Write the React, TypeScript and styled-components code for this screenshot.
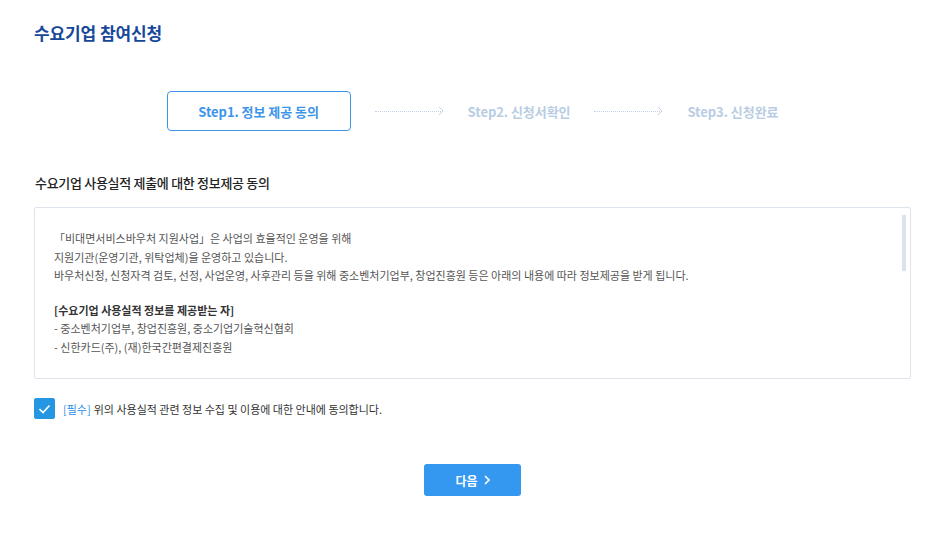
import React, { useState } from "react";
import styled, { createGlobalStyle } from "styled-components";

const GlobalStyle = createGlobalStyle`
    * { box-sizing: border-box; }
    body {
        margin: 0;
        background: #ffffff;
        font-family: "Noto Sans CJK KR", "Noto Sans", sans-serif;
        color: #333;
    }
`;

const Page = styled.div`
    padding: 20px 20px 40px 34px;
    display: flex;
    flex-direction: column;
`;

const Title = styled.h1`
    margin: 0;
    font-size: 17px;
    font-weight: 700;
    color: #16489a;
    line-height: 26px;
    letter-spacing: -0.1px;
`;

// --- Steps ---
const Steps = styled.div`
    margin-top: 45px;
    display: flex;
    align-items: center;
    justify-content: center;
    gap: 24px;
`;

const Step = styled.div<{ $active?: boolean }>`
    display: flex;
    align-items: center;
    justify-content: center;
    height: 40px;
    width: ${({ $active }) => ($active ? "184px" : "auto")};
    border: ${({ $active }) => ($active ? "1px solid #3d95ea" : "none")};
    border-radius: 4px;
    font-size: 13px;
    font-weight: 700;
    letter-spacing: -0.05px;
    color: ${({ $active }) => ($active ? "#3d95ea" : "#b8cde3")};
`;

const Connector = styled.div`
    width: 69px;
    height: 10px;
    display: flex;
    align-items: center;

    &::before {
        content: "";
        flex: 1;
        border-top: 1px dotted #c3d3e3;
    }
`;

const Chevron = styled.svg`
    flex-shrink: 0;
    margin-left: -3px;
`;

// --- Section ---
const SectionTitle = styled.h2`
    margin: 42px 0 0 1px;
    font-size: 13px;
    font-weight: 500;
    color: #222;
    line-height: 20px;
    letter-spacing: -0.3px;
`;

const AgreeBox = styled.div`
    position: relative;
    margin-top: 14px;
    height: 172px;
    border: 1px solid #dde4ec;
    border-radius: 2px;
    padding: 21px 30px 0 19px;
    overflow: hidden;
    font-size: 11px;
    color: #555;
    line-height: 18.5px;
    letter-spacing: 0;
`;

const ScrollThumb = styled.div`
    position: absolute;
    top: 7px;
    right: 4px;
    width: 4px;
    height: 56px;
    background: #dbe2ee;
`;

const Paragraph = styled.p`
    margin: 0 0 16px;
`;

const Strong = styled.div`
    font-weight: 700;
    color: #333;
`;

// --- Checkbox ---
const CheckRow = styled.label`
    margin-top: 19px;
    display: flex;
    align-items: center;
    gap: 8px;
    cursor: pointer;
    font-size: 11px;
    color: #333;
    letter-spacing: 0;
`;

const CheckBox = styled.span<{ $checked: boolean }>`
    width: 21px;
    height: 21px;
    border-radius: 2px;
    background: ${({ $checked }) => ($checked ? "#2596e2" : "#fff")};
    border: 1px solid ${({ $checked }) => ($checked ? "#2596e2" : "#ccc")};
    display: flex;
    align-items: center;
    justify-content: center;
`;

const Required = styled.span`
    color: #2b8fe6;
    margin-right: 3px;
`;

// --- Footer ---
const Footer = styled.div`
    margin-top: 45px;
    display: flex;
    justify-content: center;
`;

const NextButton = styled.button`
    width: 97px;
    height: 32px;
    border: none;
    border-radius: 3px;
    background: #3497f0;
    color: #fff;
    font-family: inherit;
    font-size: 12px;
    font-weight: 700;
    display: flex;
    align-items: center;
    justify-content: center;
    gap: 6px;
    cursor: pointer;
`;

const StepArrow: React.FC = () => (
    <Connector>
        <Chevron width="6" height="10" viewBox="0 0 6 10">
            <path d="M1 1l4 4-4 4" fill="none" stroke="#c3d3e3" strokeWidth="1" />
        </Chevron>
    </Connector>
);

const App: React.FC = () => {
    const [checked, setChecked] = useState(true);

    return (
        <>
            <GlobalStyle />
            <Page>
                <Title>수요기업 참여신청</Title>

                <Steps>
                    <Step $active>Step1. 정보 제공 동의</Step>
                    <StepArrow />
                    <Step>Step2. 신청서확인</Step>
                    <StepArrow />
                    <Step>Step3. 신청완료</Step>
                </Steps>

                <SectionTitle>수요기업 사용실적 제출에 대한 정보제공 동의</SectionTitle>

                <AgreeBox>
                    <ScrollThumb />
                    <Paragraph>
                        「비대면서비스바우처 지원사업」은 사업의 효율적인 운영을 위해
                        <br />
                        지원기관(운영기관, 위탁업체)을 운영하고 있습니다.
                        <br />
                        바우처신청, 신청자격 검토, 선정, 사업운영, 사후관리 등을 위해 중소벤처기업부, 창업진흥원 등은 아래의 내용에 따라 정보제공을 받게 됩니다.
                    </Paragraph>
                    <Strong>[수요기업 사용실적 정보를 제공받는 자]</Strong>
                    <div>- 중소벤처기업부, 창업진흥원, 중소기업기술혁신협회</div>
                    <div>- 신한카드(주), (재)한국간편결제진흥원</div>
                </AgreeBox>

                <CheckRow onClick={() => setChecked((c) => !c)}>
                    <CheckBox $checked={checked}>
                        {checked && (
                            <svg width="13" height="10" viewBox="0 0 13 10">
                                <path d="M1.5 5l3.5 3.5 6.5-7" fill="none" stroke="#fff" strokeWidth="1.6" />
                            </svg>
                        )}
                    </CheckBox>
                    <span>
                        <Required>[필수]</Required>
                        위의 사용실적 관련 정보 수집 및 이용에 대한 안내에 동의합니다.
                    </span>
                </CheckRow>

                <Footer>
                    <NextButton>
                        다음
                        <svg width="6" height="10" viewBox="0 0 6 10">
                            <path d="M1 1l4 4-4 4" fill="none" stroke="#fff" strokeWidth="1.6" />
                        </svg>
                    </NextButton>
                </Footer>
            </Page>
        </>
    );
};

export default App;
